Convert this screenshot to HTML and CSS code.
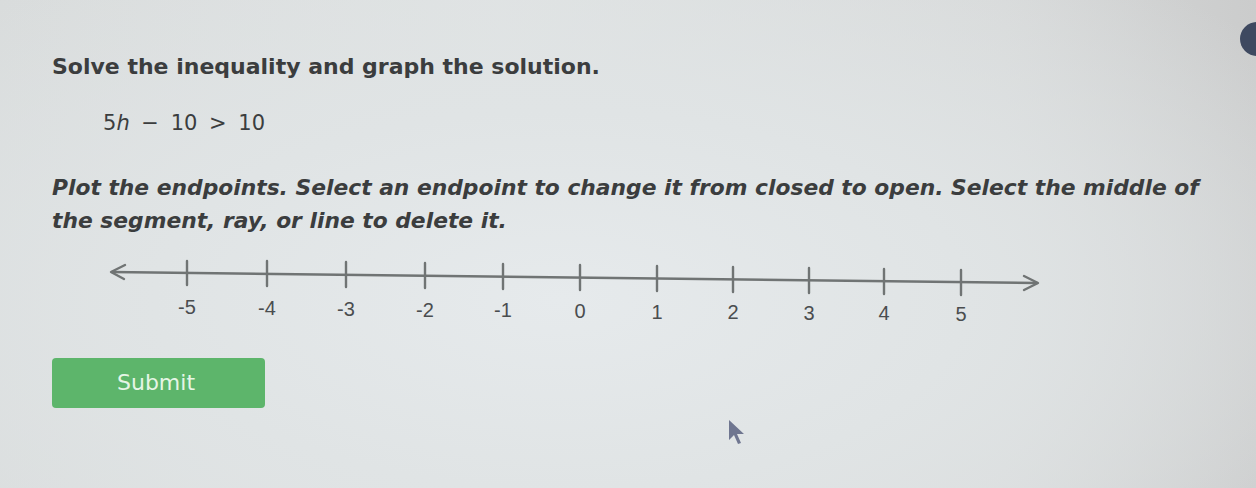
FILE: index.html
```html
<!DOCTYPE html>
<html>
<head>
<meta charset="utf-8">
<link rel="stylesheet" href="styles.css">
</head>
<body>
<div class="screen">
  <div class="avatar"></div>
  <main class="question">
    <h1 class="title">Solve the inequality and graph the solution.</h1>
    <p class="equation">5<i>h</i> − 10 &gt; 10</p>
    <p class="instructions">Plot the endpoints. Select an endpoint to change it from closed to open. Select the middle of the segment, ray, or line to delete it.</p>
    <svg class="numberline" width="1000" height="76" viewBox="0 0 1000 76">
      <g stroke="#707474" stroke-width="2.4" fill="none" stroke-linecap="round" stroke-linejoin="round">
        <line x1="60" y1="18" x2="985" y2="29"/>
        <polyline points="73,11 59,18 72,25"/>
        <polyline points="972,22 986,29 972,36"/>
        <line x1="135" y1="7" x2="135" y2="31"/>
        <line x1="215" y1="7" x2="215" y2="32"/>
        <line x1="294" y1="8" x2="294" y2="33"/>
        <line x1="373" y1="9" x2="373" y2="34"/>
        <line x1="451" y1="10" x2="451" y2="35"/>
        <line x1="528" y1="11" x2="528" y2="36"/>
        <line x1="605" y1="12" x2="605" y2="37"/>
        <line x1="681" y1="13" x2="681" y2="38"/>
        <line x1="757" y1="14" x2="757" y2="39"/>
        <line x1="832" y1="15" x2="832" y2="40"/>
        <line x1="909" y1="16" x2="909" y2="41"/>
      </g>
      <g class="labels" text-anchor="middle">
        <text x="135" y="60">-5</text>
        <text x="215" y="61">-4</text>
        <text x="294" y="62">-3</text>
        <text x="373" y="63">-2</text>
        <text x="451" y="63">-1</text>
        <text x="528" y="64">0</text>
        <text x="605" y="65">1</text>
        <text x="681" y="65">2</text>
        <text x="757" y="66">3</text>
        <text x="832" y="66">4</text>
        <text x="909" y="67">5</text>
      </g>
    </svg>
    <button class="submit">Submit</button>
  </main>
  <svg class="cursor" width="24" height="28" viewBox="0 0 24 28">
    <path d="M3 2 L3 22 L8 17 L12 26 L15 25 L11 16 L18 16 Z" fill="#6f7690"/>
  </svg>
</div>
</body>
</html>
```

FILE: styles.css
```css
html, body {
  margin: 0;
  padding: 0;
}
body {
  width: 1256px;
  height: 488px;
  overflow: hidden;
  font-family: "DejaVu Sans", Verdana, sans-serif;
  color: #3b3d3e;
}
.screen {
  position: relative;
  width: 1256px;
  height: 488px;
  background:
    radial-gradient(ellipse 900px 420px at 560px 300px, #e6eaec 0%, #e0e4e5 45%, rgba(214,217,217,0) 100%),
    linear-gradient(90deg, #d8dbdb 0%, #dfe2e2 40%, #d7d9d9 80%, #cbcccc 100%);
}
.question {
  padding: 51px 0 0 52px;
}
.title {
  margin: 0;
  font-size: 22px;
  font-weight: bold;
  line-height: 32px;
}
.equation {
  margin: 26px 0 0 51px;
  font-size: 21px;
  line-height: 28px;
  word-spacing: 5px;
}
.equation i {
  font-style: italic;
}
.instructions {
  margin: 34px 0 0 0;
  width: 1160px;
  font-size: 21.8px;
  font-weight: bold;
  font-style: italic;
  line-height: 33px;
}
.numberline {
  display: block;
  margin: 17px 0 0 0;
}
.labels {
  font-family: "Liberation Sans", Arial, sans-serif;
  font-size: 20px;
  fill: #4a4d4f;
}
.submit {
  display: block;
  margin: 28px 0 0 0;
  width: 213px;
  height: 50px;
  border: none;
  border-radius: 4px;
  background: #5db56b;
  color: #e6f5e6;
  font-family: "DejaVu Sans", Verdana, sans-serif;
  font-size: 22px;
  text-align: left;
  padding: 0 0 2px 65px;
}
.avatar {
  position: absolute;
  left: 1240px;
  top: 22px;
  width: 34px;
  height: 34px;
  border-radius: 50%;
  background: #3e4960;
}
.cursor {
  position: absolute;
  left: 726px;
  top: 418px;
}
```
